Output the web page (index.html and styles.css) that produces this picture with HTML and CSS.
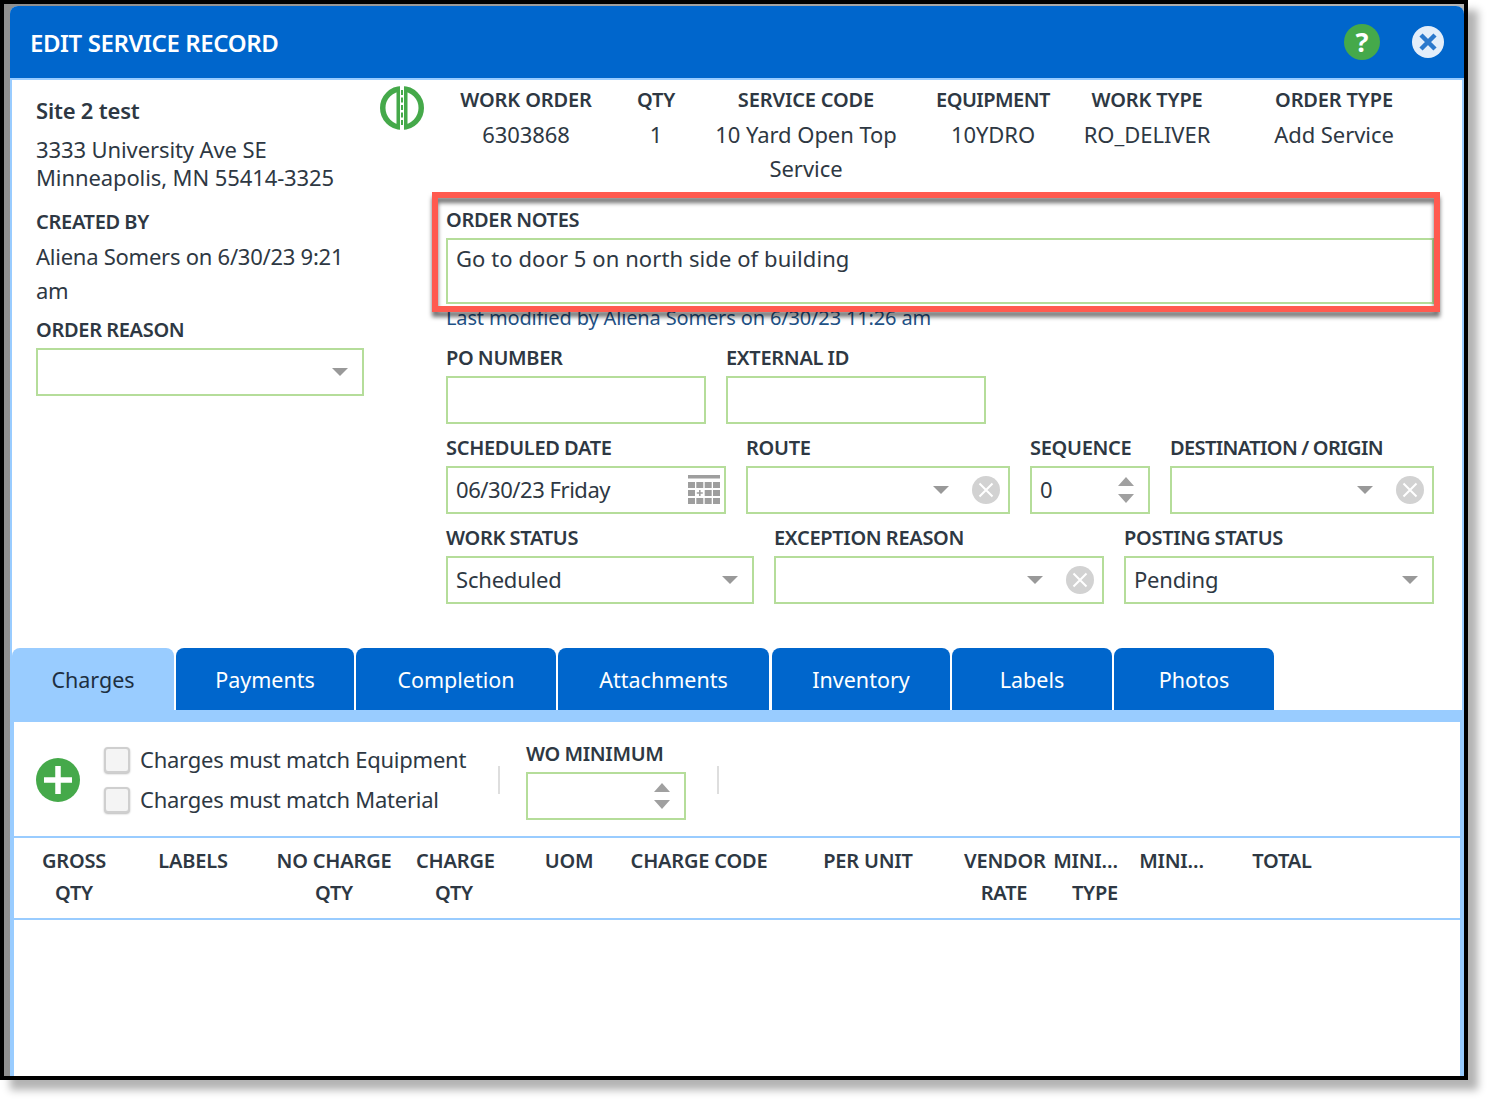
FILE: index.html
```html
<!DOCTYPE html>
<html lang="en">
<head>
<meta charset="utf-8">
<title>Edit Service Record</title>
<link rel="stylesheet" href="styles.css">
</head>
<body>
<div class="frame">
  <div class="dialog">
    <header class="titlebar">
      <h1 class="title">EDIT SERVICE RECORD</h1>
      <span class="help">?</span>
      <svg class="close" viewBox="0 0 32 32"><circle cx="16" cy="16" r="16" fill="#e3eefa"/><path d="M9 9l14 14M23 9L9 23" stroke="#2a78cc" stroke-width="4.500" fill="none"/></svg>
    </header>
    <section class="top">
      <div class="site">
        <div class="site-name">Site 2 test</div>
        <div class="address">3333 University Ave SE<br>Minneapolis, MN 55414-3325</div>
        <div class="label created">CREATED BY</div>
        <div class="created-val">Aliena Somers on 6/30/23 9:21<br>am</div>
        <div class="label reason">ORDER REASON</div>
        <div class="field w-reason"><svg class="caret" viewBox="0 0 16 8"><path d="M0 0h16L8 8z"/></svg></div>
      </div>
      <svg class="route" viewBox="0 0 44 44">
        <circle cx="22" cy="22" r="19.250" fill="none" stroke="#45a94a" stroke-width="5.500"/>
        <rect x="20" width="4" height="44" fill="#fff"/>
        <path d="M16.500 3h3.500v38h-3.500zM24 3h3.500v38H24z" fill="#45a94a"/>
        <path d="M22 4v36" stroke="#45a94a" stroke-width="2" stroke-dasharray="5 2.500"/>
      </svg>
      <div class="main">
        <div class="summary">
          <div class="sum"><b>WORK ORDER</b><span>6303868</span></div>
          <div class="sum"><b>QTY</b><span>1</span></div>
          <div class="sum"><b>SERVICE CODE</b><span>10 Yard Open Top Service</span></div>
          <div class="sum"><b class="tight">EQUIPMENT</b><span>10YDRO</span></div>
          <div class="sum"><b>WORK TYPE</b><span>RO_DELIVER</span></div>
          <div class="sum"><b>ORDER TYPE</b><span>Add Service</span></div>
        </div>
        <div class="label">ORDER NOTES</div>
        <div class="notes">Go to door 5 on north side of building</div>
        <div class="modified">Last modified by Aliena Somers on 6/30/23 11:26 am</div>
        <div class="row row-po">
          <div class="col w260"><div class="label">PO NUMBER</div><div class="field"></div></div>
          <div class="col w260"><div class="label">EXTERNAL ID</div><div class="field"></div></div>
        </div>
        <div class="row">
          <div class="col w280"><div class="label">SCHEDULED DATE</div><div class="field date">06/30/23 Friday
            <svg class="cal" viewBox="0 0 32 30"><g fill="#9e9e9e"><rect width="32" height="3.500"/><rect y="7" width="7" height="6"/><rect x="8.300" y="7" width="7" height="6"/><rect x="16.700" y="7" width="7" height="6"/><rect x="25" y="7" width="7" height="6"/><rect y="15" width="7" height="6"/><path d="M11 15h1.600v2.200h2.200v1.600h-2.200V21H11v-2.200H8.800v-1.600H11z"/><rect x="16.700" y="15" width="7" height="6"/><rect x="25" y="15" width="7" height="6"/><rect y="23" width="7" height="6"/><rect x="8.300" y="23" width="7" height="6"/><rect x="16.700" y="23" width="7" height="6"/><rect x="25" y="23" width="7" height="6"/></g></svg></div></div>
          <div class="col w264"><div class="label">ROUTE</div><div class="field"><svg class="caret" viewBox="0 0 16 8"><path d="M0 0h16L8 8z"/></svg><svg class="clear" viewBox="0 0 28 28"><circle cx="14" cy="14" r="14" fill="#d2d2d2"/><path d="M7.500 7.500l13 13M20.500 7.500l-13 13" stroke="#fff" stroke-width="2"/></svg></div></div>
          <div class="col w120"><div class="label">SEQUENCE</div><div class="field">0<svg class="spin" viewBox="0 0 16 26"><path d="M0 9L8 0l8 9zM0 17h16l-8 9z"/></svg></div></div>
          <div class="col w264"><div class="label tight">DESTINATION / ORIGIN</div><div class="field"><svg class="caret" viewBox="0 0 16 8"><path d="M0 0h16L8 8z"/></svg><svg class="clear" viewBox="0 0 28 28"><circle cx="14" cy="14" r="14" fill="#d2d2d2"/><path d="M7.500 7.500l13 13M20.500 7.500l-13 13" stroke="#fff" stroke-width="2"/></svg></div></div>
        </div>
        <div class="row">
          <div class="col w308"><div class="label">WORK STATUS</div><div class="field">Scheduled<svg class="caret" viewBox="0 0 16 8"><path d="M0 0h16L8 8z"/></svg></div></div>
          <div class="col w330"><div class="label">EXCEPTION REASON</div><div class="field"><svg class="caret" viewBox="0 0 16 8"><path d="M0 0h16L8 8z"/></svg><svg class="clear" viewBox="0 0 28 28"><circle cx="14" cy="14" r="14" fill="#d2d2d2"/><path d="M7.500 7.500l13 13M20.500 7.500l-13 13" stroke="#fff" stroke-width="2"/></svg></div></div>
          <div class="col w310"><div class="label">POSTING STATUS</div><div class="field">Pending<svg class="caret" viewBox="0 0 16 8"><path d="M0 0h16L8 8z"/></svg></div></div>
        </div>
      </div>
    </section>
    <nav class="tabs">
      <a class="tab active t162">Charges</a>
      <a class="tab t178">Payments</a>
      <a class="tab t200">Completion</a>
      <a class="tab t211">Attachments</a>
      <a class="tab t178">Inventory</a>
      <a class="tab t160">Labels</a>
      <a class="tab t160">Photos</a>
    </nav>
    <section class="panel">
      <div class="toolbar">
        <svg class="add" viewBox="0 0 44 44"><circle cx="22" cy="22" r="22" fill="#45a94a"/><path d="M22 8v28M8 22h28" stroke="#fff" stroke-width="5.500"/></svg>
        <div class="checks">
          <label class="check"><span class="box"></span><span class="check-text">Charges must match Equipment</span></label>
          <label class="check"><span class="box"></span><span class="check-text">Charges must match Material</span></label>
        </div>
        <span class="sep"></span>
        <div class="wo"><div class="label">WO MINIMUM</div><div class="field"><svg class="spin" viewBox="0 0 16 26"><path d="M0 9L8 0l8 9zM0 17h16l-8 9z"/></svg></div></div>
        <span class="sep"></span>
      </div>
      <div class="thead">
        <div>GROSS<br>QTY</div>
        <div>LABELS</div>
        <div>NO CHARGE<br>QTY</div>
        <div>CHARGE<br>QTY</div>
        <div class="uom">UOM</div>
        <div>CHARGE CODE</div>
        <div class="perunit">PER UNIT</div>
        <div>VENDOR<br>RATE</div>
        <div class="end">MINI…<br>TYPE</div>
        <div class="end">MINI…</div>
        <div>TOTAL</div>
      </div>
    </section>
  </div>
  <div class="callout"></div>
</div>
</body>
</html>
```
FILE: styles.css
```css
* { box-sizing: border-box; }
html, body { margin: 0; height: 1100px; overflow: hidden; background: #fff; }
body { font-family: "Noto Sans", "Open Sans", sans-serif; font-size: 22px; color: #2e3843; }

.frame {
  position: relative;
  width: 1468px;
  height: 1080px;
  border: 4px solid #000;
  padding: 2px 0 0 6px;
  background: linear-gradient(90deg, #8f8f8f, #b5b5b5);
  box-shadow: 10px 10px 8px #b4b4b4;
}
.dialog {
  display: flex;
  flex-direction: column;
  width: 1454px;
  height: 1070px;
  background: #fff;
  border: solid #99ccff;
  border-width: 0 2px 0 2px;
  border-radius: 8px 8px 0 0;
}
.titlebar {
  display: flex;
  align-items: center;
  height: 74px;
  margin: 0 -2px;
  padding-left: 20px;
  background: #0066cc;
  border-bottom: 2px solid #99ccff;
  border-radius: 8px 8px 0 0;
}
.title { flex: 1; margin: 0; font-size: 24px; font-weight: 600; letter-spacing: -.42px; color: #fff; }
.help {
  width: 36px; height: 36px; margin-right: 32px; border-radius: 50%;
  background: #45a94a; color: #fff; font-size: 27px; font-weight: 700;
  line-height: 36px; text-align: center;
}
.close { width: 32px; height: 32px; margin-right: 20px; }

.top { display: flex; height: 568px; padding-left: 24px; }
.site { width: 328px; padding-top: 13px; }
.site-name { font-weight: 600; line-height: 34px; letter-spacing: -.2px; }
.address { margin-top: 8px; line-height: 28px; letter-spacing: -.1px; }
.label { font-size: 20px; font-weight: 600; line-height: 20px; white-space: nowrap; letter-spacing: -.3px; word-spacing: -.5px; }
.label.tight { letter-spacing: -.6px; }
.created { margin-top: 21px; }
.created-val { margin-top: 7px; line-height: 34px; letter-spacing: -.25px; }
.reason { margin-top: 13px; }

.field {
  display: flex;
  align-items: center;
  height: 48px;
  margin-top: 8px;
  padding: 0 8px 2px;
  border: 2px solid #b5dd9a;
  line-height: 28px;
  white-space: nowrap;
  letter-spacing: -.2px;
}
.field.date { letter-spacing: -.45px; }
.route { width: 44px; height: 44px; margin: 6px 22px 0 16px; flex: none; }
.main { flex: none; width: 988px; }

.summary { display: grid; grid-template-columns: 160px 100px 200px 174px 134px 240px; width: 1008px; padding-top: 3px; height: 130px; }
.sum { display: flex; flex-direction: column; align-items: center; text-align: center; line-height: 34px; }
.sum b { font-size: 20px; font-weight: 600; white-space: nowrap; letter-spacing: -.15px; }
.sum b.tight { letter-spacing: -.5px; }
.sum span { width: 190px; letter-spacing: -.05px; }

.notes { height: 66px; margin-top: 8px; padding: 2px 8px; border: 2px solid #b5dd9a; line-height: 32px; letter-spacing: .08px; }
.modified { height: 44px; padding-top: 2px; font-size: 20px; line-height: 24px; letter-spacing: -.15px; color: #1f5286; white-space: nowrap; }

.row { display: flex; gap: 20px; margin-bottom: 14px; }
.col { flex: none; }
.w260 { width: 260px; }
.w264 { width: 264px; }
.w280 { width: 280px; }
.w120 { width: 120px; }
.w308 { width: 308px; }
.w330 { width: 330px; }
.w310 { width: 310px; }
.w-reason { width: 328px; }

.caret { width: 16px; height: 8px; margin: 2px 6px 0 auto; fill: #999; flex: none; }
.clear { width: 28px; height: 28px; margin: 2px 0 0 17px; flex: none; }
.spin { width: 16px; height: 26px; margin: 2px 6px 0 auto; fill: #a0a0a0; flex: none; }
.cal { width: 32px; height: 30px; margin: 2px -4px 0 auto; flex: none; }

.tabs { display: flex; gap: 2px; height: 62px; font-size: 21.500px; }
.tab {
  display: flex; align-items: center; justify-content: center;
  background: #0066cc; color: #fff; border-radius: 8px 8px 0 0;
}
.tab.active { background: #99ccff; color: #1d2f42; }
.t162 { width: 162px; }
.t178 { width: 178px; }
.t200 { width: 200px; }
.t211 { width: 211px; margin-right: 1px; }
.t160 { width: 160px; }

.panel {
  flex: 1;
  border: solid #99ccff;
  border-width: 12px 2px 0 2px;
}
.toolbar {
  display: flex;
  align-items: flex-start;
  height: 116px;
  border-bottom: 2px solid #99ccff;
}
.add { width: 44px; height: 44px; margin: 36px 0 0 22px; flex: none; }
.checks { margin: 18px 0 0 24px; width: 394px; letter-spacing: -.25px; }
.check { display: flex; align-items: center; height: 40px; }
.check-text { margin-top: -2px; }
.box {
  width: 26px; height: 26px; margin-right: 10px; flex: none;
  border: 2px solid #cfcfcf; border-radius: 4px; background: #f4f4f4;
  box-shadow: 0 1px 2px #bbb;
}
.sep { width: 2px; height: 28px; margin-top: 44px; background: #dedede; flex: none; }
.wo { width: 160px; margin: 22px 31px 0 26px; flex: none; }
.thead {
  display: grid;
  grid-template-columns: 120px 118px 164px 76px 138px 138px 196px 80px 74px 86px 156px;
  height: 82px;
  padding-top: 7px;
  border-bottom: 2px solid #99ccff;
  font-size: 20px;
  font-weight: 600;
  line-height: 32px;
  letter-spacing: -.2px;
  text-align: center;
  white-space: nowrap;
}
.uom { padding-left: 16px; }
.perunit { padding: 0 20px 0 24px; }
.end { text-align: right; }

.callout {
  position: absolute;
  left: 428px;
  top: 188px;
  width: 1008px;
  height: 120px;
  border: 6px solid #ff5a4f;
  filter: drop-shadow(0 5px 2px rgba(0,0,0,.55));
}
```
